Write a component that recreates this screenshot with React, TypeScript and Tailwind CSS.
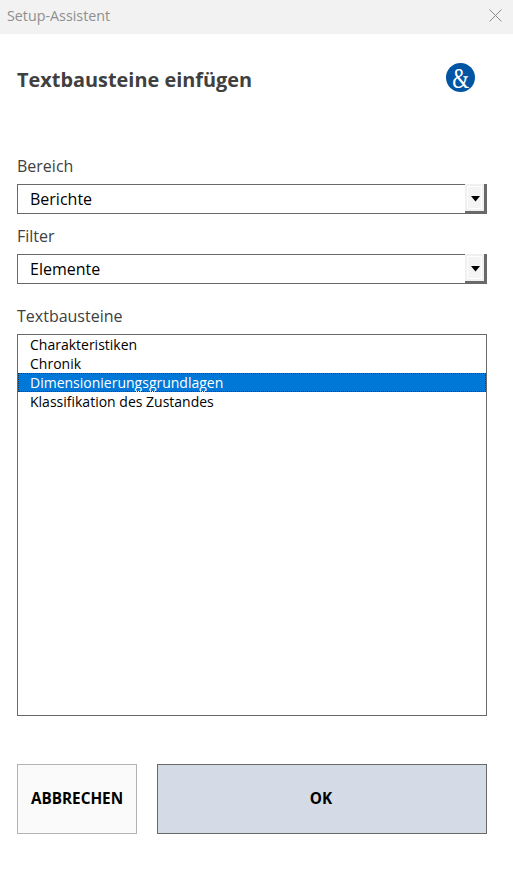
function Label({ children, className }: { children: React.ReactNode; className: string }) {
  return <div className={`text-[16px] leading-[22px] text-[#404040] ${className}`}>{children}</div>;
}

function Dropdown({ value }: { value: string }) {
  return (
    <div className="flex h-[30px] border border-[#696969] border-r-0 bg-white">
      <div className="flex-1 pl-3 text-[16px] leading-[28px] text-black">{value}</div>
      <div className="-mt-px -mb-px flex h-[30px] w-[22px] flex-col bg-[#696969] pr-[3px] pb-[3px]">
        <div className="flex flex-1 items-center justify-center border-2 border-[#f0f0f0] bg-[#f4f4f4] shadow-[inset_0_0_0_1px_#ffffff]">
          <svg width="10" height="6" viewBox="0 0 10 6" className="mt-[3px] ml-[2px]">
            <path d="M0 0h9L4.5 5.5z" fill="#000" />
          </svg>
        </div>
      </div>
    </div>
  );
}

const items = ["Charakteristiken", "Chronik", "Dimensionierungsgrundlagen", "Klassifikation des Zustandes"];

export default function App() {
  return (
    <div className="flex h-[871px] w-[513px] flex-col bg-white font-['Open_Sans',sans-serif]">
      <div className="flex h-[34px] items-center justify-between bg-[#f2f2f2] pr-[11px] pb-[4px] pl-[7px]">
        <span className="mt-[1px] text-[14.3px] text-[#8f8f8f]">Setup-Assistent</span>
        <svg width="13" height="13" viewBox="0 0 13 13">
          <path d="M.5.5l12 12M12.5.5l-12 12" stroke="#8a8a8a" strokeWidth="1" fill="none" />
        </svg>
      </div>

      <div className="flex flex-col pr-[26px] pl-[17px]">
        <div className="mt-[29px] flex h-[34px] items-center justify-between pr-[12px]">
          <h1 className="text-[19.9px] leading-[34px] font-bold text-[#404040]">Textbausteine einfügen</h1>
          <div className="-mt-[5px] flex h-[29px] w-[29px] items-center justify-center rounded-full bg-[#0054a4] font-['Liberation_Serif',serif] text-[30px] leading-[29px] text-white">
            <span className="scale-x-[0.72]">&amp;</span>
          </div>
        </div>

        <Label className="mt-[58px]">Bereich</Label>
        <div className="mt-[7px]">
          <Dropdown value="Berichte" />
        </div>
        <Label className="mt-[11px]">Filter</Label>
        <div className="mt-[7px]">
          <Dropdown value="Elemente" />
        </div>
        <Label className="mt-[21px]">Textbausteine</Label>

        <div className="mt-[7px] h-[382px] border border-[#696969] bg-white">
          {items.map((item, i) => (
            <div
              key={item}
              className={`h-[19px] pl-3 text-[14px] leading-[19px] ${
                i === 2 ? "bg-[#0078d7] text-white outline-1 -outline-offset-1 outline-[#333] outline-dotted" : "text-black"
              }`}
            >
              {item}
            </div>
          ))}
        </div>

        <div className="mt-[48px] flex gap-5 text-[15.3px] font-bold text-black">
          <button className="h-[70px] w-[120px] border border-[#b3b3b3] bg-[#fafafa] pb-[2px]">ABBRECHEN</button>
          <button className="h-[70px] flex-1 border border-[#696969] bg-[#d5dbe6] pr-[2px] pb-[2px]">OK</button>
        </div>
      </div>
    </div>
  );
}
